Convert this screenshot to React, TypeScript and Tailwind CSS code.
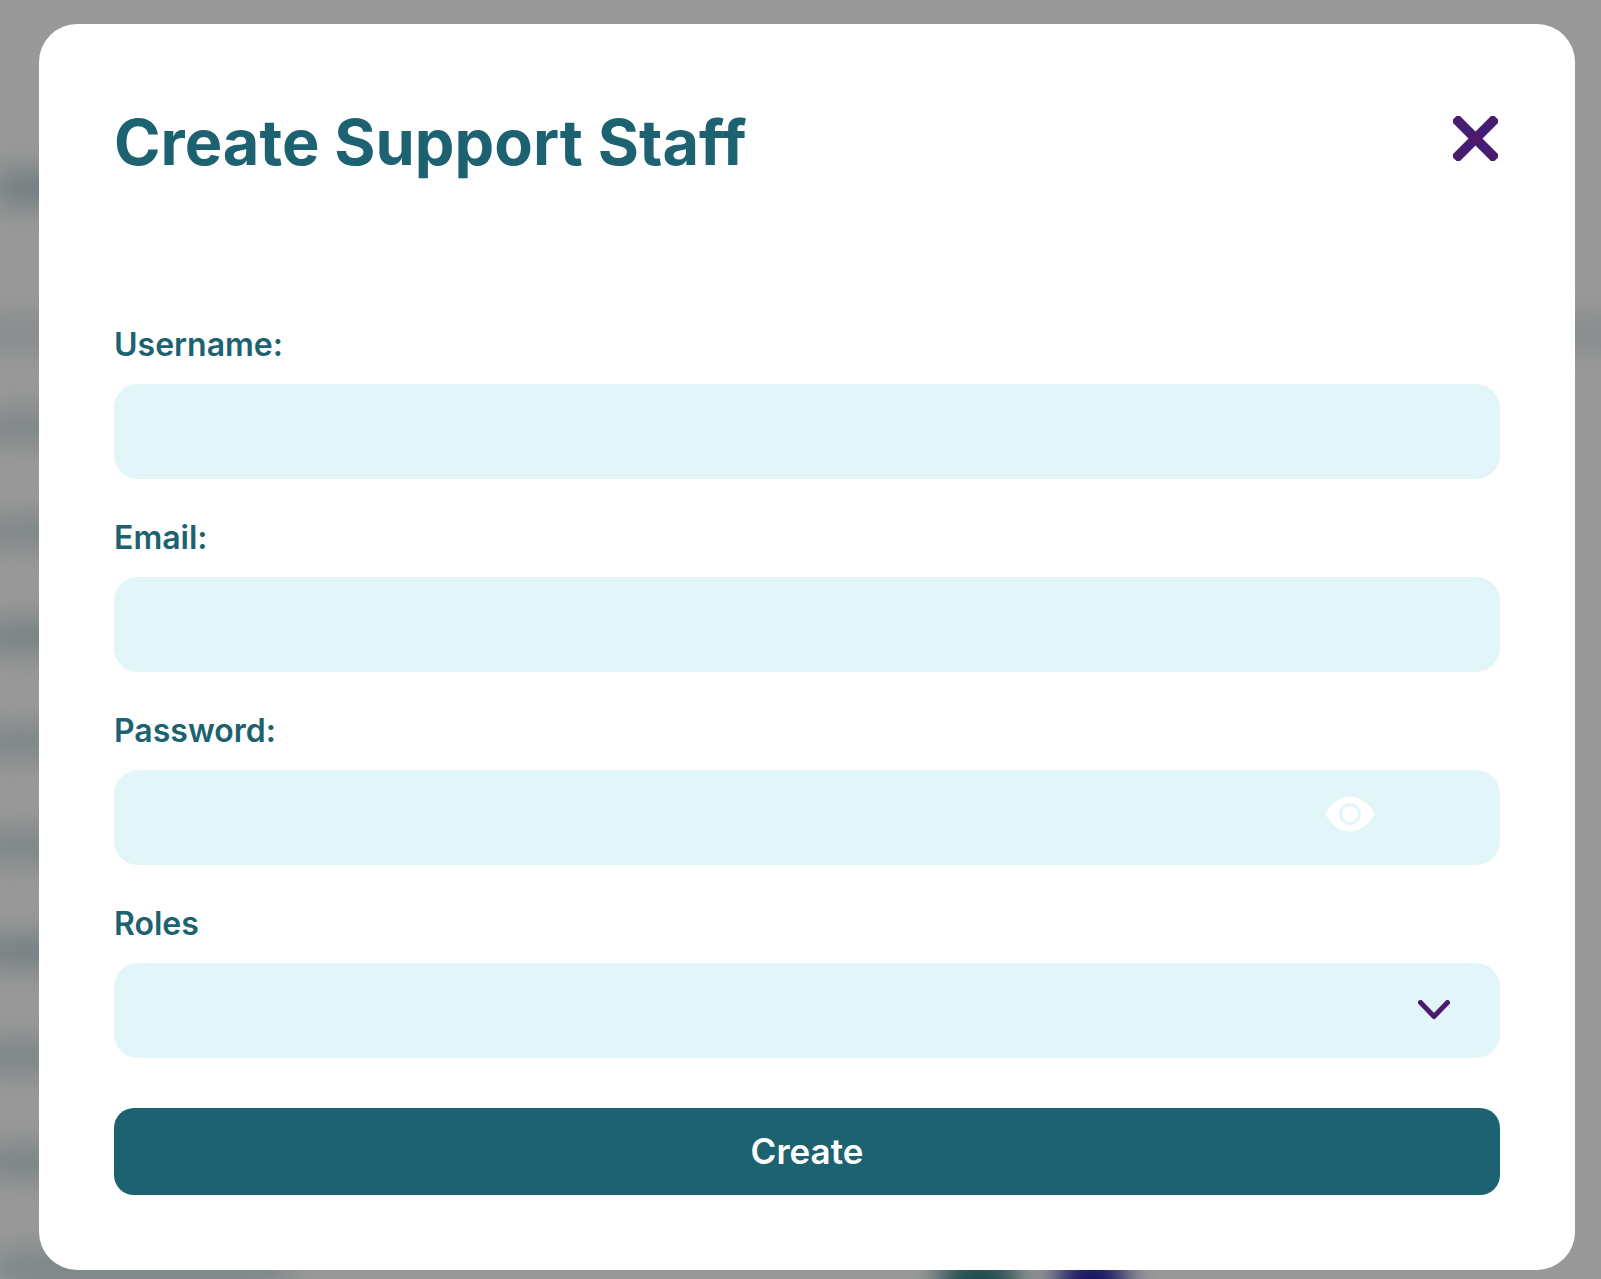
import { useState, FormEvent } from 'react';
import clsx from 'clsx';

const FIELD_CLASS =
  'block w-full h-[95px] rounded-3xl bg-[#e2f5f9] px-8 text-[32px] text-[#1d6270] outline-none';
const LABEL_CLASS = 'block text-[32px] leading-10 font-semibold text-[#1d6270]';

// Rows of the page behind the dialog
const rows = [
  { id: 1, tone: 'bg-[#7b8383]' },
  { id: 2, tone: 'bg-[#7b8383]' },
  { id: 3, tone: 'bg-[#737d80]' },
  { id: 4, tone: 'bg-[#798283]' },
  { id: 5, tone: 'bg-[#798283]' },
  { id: 6, tone: 'bg-[#6f7a7e]' },
  { id: 7, tone: 'bg-[#778182]' },
  { id: 8, tone: 'bg-[#768082]' },
];

function CloseIcon() {
  return (
    <svg viewBox="0 0 45 45" className="w-[45px] h-[45px]" aria-hidden="true">
      <defs>
        <radialGradient id="close-fill" gradientUnits="userSpaceOnUse" cx="22.5" cy="22.5" r="30">
          <stop offset="0" stopColor="#54166a" />
          <stop offset="0.15" stopColor="#50186c" />
          <stop offset="0.4" stopColor="#3f1f78" />
          <stop offset="0.75" stopColor="#4a1c6c" />
          <stop offset="1" stopColor="#4e1a68" />
        </radialGradient>
      </defs>
      <path
        d="M3.500 0H7L22.500 15.500 38 0H41.500L45 3.500V7L29.500 22.500 45 38V41.500L41.500 45H38L22.500 29.500 7 45H3.500L0 41.500V38L15.500 22.500 0 7V3.500Z"
        fill="url(#close-fill)"
      />
    </svg>
  );
}

function EyeIcon() {
  return (
    <svg viewBox="0 0 50 36" className="w-[50px] h-9" aria-hidden="true">
      <path d="M0 18C6 8 15 .5 25 .5S44 8 50 18C44 28 35 35.500 25 35.500S6 28 0 18Z" fill="#fff" />
      <circle cx="25" cy="18" r="9.300" fill="#fff" stroke="#e2f5f9" strokeWidth="3" />
    </svg>
  );
}

function ChevronIcon() {
  return (
    <svg viewBox="0 0 32 20" className="w-8 h-5" aria-hidden="true">
      <path
        d="M2.500 2.500 16 16.500 29.500 2.500"
        fill="none"
        stroke="#4b1c6e"
        strokeWidth="5"
        strokeLinecap="round"
        strokeLinejoin="round"
      />
    </svg>
  );
}

function PageBehind() {
  return (
    <div
      className="col-start-1 row-start-1 h-0 min-h-full overflow-hidden bg-[#999]"
      aria-hidden="true"
    >
      <div className="-mx-8 flex flex-col blur-[15px]">
        <div className="mt-[172px] ml-6 h-8 w-80 rounded-full bg-[#6c797c]" />
        <div className="mt-[116px] h-7 bg-[#828889]" />
        <div className="mt-16 flex flex-col gap-[76px]">
          {rows.map((row) => (
            <div key={row.id} className={clsx('ml-3 h-[29px] w-80 rounded-full', row.tone)} />
          ))}
        </div>
        <div className="mt-[76px] ml-6 flex">
          <div className="h-8 w-[300px] rounded-full bg-[#788384]" />
          <div className="ml-[650px] flex gap-11">
            <div className="h-16 w-[74px] bg-[#1f4a4e]" />
            <div className="h-16 w-[64px] bg-[#12105e]" />
          </div>
        </div>
      </div>
    </div>
  );
}

export default function App() {
  const [showPassword, setShowPassword] = useState(false);
  const [open, setOpen] = useState(true);

  const handleSubmit = (e: FormEvent) => {
    e.preventDefault();
  };

  return (
    <div className="grid min-h-screen font-['Inter',sans-serif]">
      <PageBehind />

      {open && (
        <div
          role="dialog"
          aria-labelledby="dialog-title"
          className="relative col-start-1 row-start-1 self-start mt-6 mb-2 ml-[39px] mr-[26px] rounded-[38px] bg-white p-[75px]"
        >
          <div className="flex items-start justify-between">
            <h1 id="dialog-title" className="text-[63px] leading-[86px] font-bold text-[#1d6270]">
              Create Support Staff
            </h1>
            <button
              type="button"
              aria-label="Close"
              className="mt-[17px] mr-0.5 cursor-pointer"
              onClick={() => setOpen(false)}
            >
              <CloseIcon />
            </button>
          </div>

          <form className="mt-[140px]" onSubmit={handleSubmit}>
            <div className="flex flex-col gap-[39px]">
              <div>
                <label htmlFor="username" className={LABEL_CLASS}>Username:</label>
                <input id="username" type="text" className={clsx(FIELD_CLASS, 'mt-[19px]')} />
              </div>

              <div>
                <label htmlFor="email" className={LABEL_CLASS}>Email:</label>
                <input id="email" type="email" className={clsx(FIELD_CLASS, 'mt-[19px]')} />
              </div>

              <div>
                <label htmlFor="password" className={LABEL_CLASS}>Password:</label>
                <div className="relative mt-[19px]">
                  <input
                    id="password"
                    type={showPassword ? 'text' : 'password'}
                    className={FIELD_CLASS}
                  />
                  <button
                    type="button"
                    aria-label="Show password"
                    className="absolute right-[125px] top-[26px] cursor-pointer"
                    onClick={() => setShowPassword((prev) => !prev)}
                  >
                    <EyeIcon />
                  </button>
                </div>
              </div>

              <div>
                <label htmlFor="roles" className={LABEL_CLASS}>Roles</label>
                <div className="relative mt-[19px]">
                  <select id="roles" defaultValue="" className={clsx(FIELD_CLASS, 'appearance-none')}>
                    <option value=""></option>
                  </select>
                  <span className="pointer-events-none absolute right-[50px] top-[37px]">
                    <ChevronIcon />
                  </span>
                </div>
              </div>
            </div>

            <button
              type="submit"
              className="mt-[50px] block h-[87px] w-full cursor-pointer rounded-[20px] bg-[#1d6270] text-[35px] font-semibold text-white"
            >
              Create
            </button>
          </form>
        </div>
      )}
    </div>
  );
}
